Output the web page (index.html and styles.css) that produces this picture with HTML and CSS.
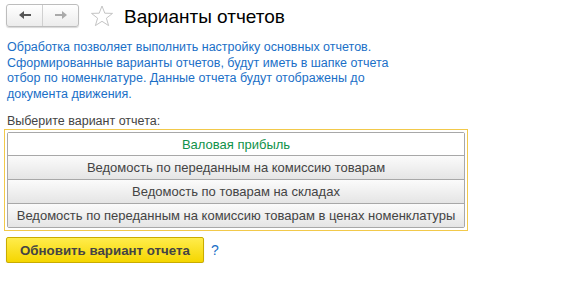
FILE: index.html
```html
<!doctype html>
<html>

<head>
    <title>Варианты отчетов</title>
    <link rel="stylesheet" href="styles.css">
</head>

<body>
    <div class="header">
        <div class="navButtons">
            <span class="navBtn">
                <svg width="14" height="10" viewBox="0 0 14 10"><path d="M1 5 L6 1 L6 4 L13 4 L13 6 L6 6 L6 9 Z" fill="#555"/></svg>
            </span>
            <span class="navBtn">
                <svg width="14" height="10" viewBox="0 0 14 10"><path d="M13 5 L8 1 L8 4 L1 4 L1 6 L8 6 L8 9 Z" fill="#aaa"/></svg>
            </span>
        </div>
        <svg class="star" width="24" height="22" viewBox="0 0 24 22">
            <path d="M12 1 L14.8 8.2 L22.5 8.4 L16.4 13.2 L18.6 20.6 L12 16.3 L5.4 20.6 L7.6 13.2 L1.5 8.4 L9.2 8.2 Z" fill="none" stroke="#c4c4c4" stroke-width="1"/>
        </svg>
        <h1 class="title">Варианты отчетов</h1>
    </div>

    <p class="info">Обработка позволяет выполнить настройку основных отчетов.<br>
        Сформированные варианты отчетов, будут иметь в шапке отчета<br>
        отбор по номенклатуре. Данные отчета будут отображены до<br>
        документа движения.</p>

    <div class="chooseLabel">Выберите вариант отчета:</div>

    <div class="variantsFrame">
        <div class="variants">
            <div class="variant selected">Валовая прибыль</div>
            <div class="variant">Ведомость по переданным на комиссию товарам</div>
            <div class="variant">Ведомость по товарам на складах</div>
            <div class="variant">Ведомость по переданным на комиссию товарам в ценах номенклатуры</div>
        </div>
    </div>

    <div class="actions">
        <button class="updateButton">Обновить вариант отчета</button>
        <span class="help">?</span>
    </div>
</body>

</html>
```

FILE: styles.css
```css
* {
    margin: 0;
    padding: 0;
    box-sizing: border-box;
}

body {
    font: 12.5px "Liberation Sans", Arial, sans-serif;
    color: #4d4d4d;
    background: #fff;
    padding: 4px 4px 0 4px;
}

.header {
    display: flex;
    align-items: center;
    height: 22px;
    margin-left: 2px;
}

.navButtons {
    display: flex;
    width: 73px;
    height: 23px;
    border: solid 1px #bdbdbd;
    border-radius: 3px;
    background: linear-gradient(#fff, #ececec);
    box-shadow: 0 1px 1px #d8d8d8;
}

.navBtn {
    flex: 1;
    display: flex;
    justify-content: center;
    align-items: center;
}

.navBtn + .navBtn {
    border-left: solid 1px #d0d0d0;
}

.star {
    margin-left: 11px;
    margin-top: 1px;
}

.title {
    font-weight: normal;
    font-size: 19px;
    color: #000;
    margin-left: 10px;
    margin-top: 3px;
}

.info {
    color: #1a6fc7;
    line-height: 15.5px;
    margin: 14px 0 0 3px;
}

.chooseLabel {
    margin: 12px 0 0 3px;
    color: #444;
}

.variantsFrame {
    width: 464px;
    border: solid 1px #f2c94a;
    padding: 2px;
    margin-top: 1px;
}

.variants {
    border: solid 1px #a8a8a8;
    border-radius: 2px;
}

.variant {
    height: 24px;
    line-height: 23px;
    font-size: 13px;
    text-align: center;
    color: #444;
    background: linear-gradient(#fbfbfb, #e5e5e5);
    border-top: solid 1px #a8a8a8;
}

.variant.selected {
    border-top: none;
    height: 22px;
    background: #fff;
    color: #10924a;
}

.actions {
    display: flex;
    align-items: center;
    margin: 6px 0 0 2px;
}

.updateButton {
    width: 198px;
    height: 26px;
    font: bold 13.3px "Liberation Sans", Arial, sans-serif;
    color: #444;
    border: solid 1px #c9ac00;
    border-radius: 2px;
    background: linear-gradient(#ffec4c, #f5d600);
    box-shadow: 0 1px 1px #c8c8c8;
}

.help {
    color: #1a6fc7;
    font-size: 14px;
    margin-left: 7px;
}
```
